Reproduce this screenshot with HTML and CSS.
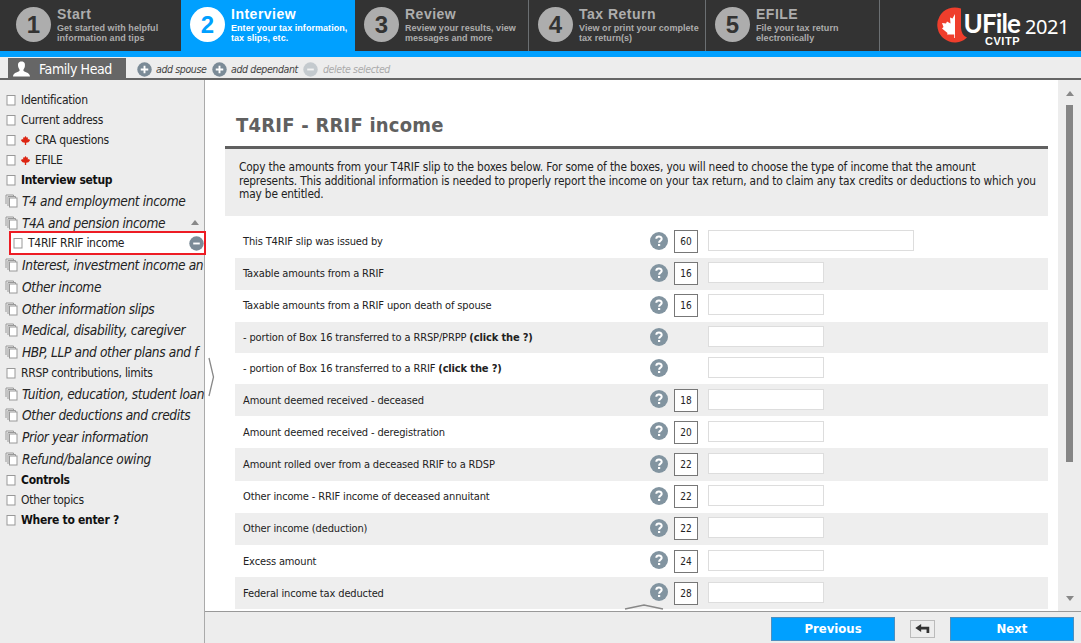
FILE: index.html
```html
<!DOCTYPE html>
<html lang="en">
<head>
<meta charset="utf-8">
<title>UFile CVITP 2021 - T4RIF</title>
<link rel="stylesheet" href="styles.css">
</head>
<body>
<svg class="defs" aria-hidden="true">
  <symbol id="page" viewBox="0 0 10 12"><rect x="1" y="1.500" width="8" height="9.500" fill="#fff" stroke="#999"/></symbol>
  <symbol id="pages" viewBox="0 0 13 14"><path d="M1 10V1H8.500V3M3 12V2.500H10.500V4" fill="#eee" stroke="#999"/><rect x="4.500" y="4" width="7.500" height="9" fill="#fff" stroke="#999"/></symbol>
  <symbol id="leaf" viewBox="0 0 20 20"><path d="M10 0 13 4 15.500 3 15 7.500 18 6.500 20 10 16.500 14 11.500 15V20H8.500V15L3.500 14 0 10 2 6.500 5 7.500 4.500 3 7 4Z" fill="#dc2411"/></symbol>
  <symbol id="help" viewBox="0 0 18 18"><circle cx="9" cy="9" r="9" fill="#8294a0"/><path d="M6.300 6.800C6.400 3.700 11.800 3.800 11.700 6.900 11.600 8.700 9.200 8.500 9.100 10.700" fill="none" stroke="#fff" stroke-width="2"/><rect x="8" y="12" width="2.200" height="2" fill="#fff"/></symbol>
  <symbol id="plus" viewBox="0 0 16 16"><circle cx="8" cy="8" r="7.700" fill="#7b8b97"/><path d="M8 4v8M4 8h8" stroke="#fff" stroke-width="2"/></symbol>
  <symbol id="minus" viewBox="0 0 16 16"><circle cx="8" cy="8" r="7.700" fill="#7b8b97"/><path d="M4.500 8h7" stroke="#fff" stroke-width="2"/></symbol>
</svg>
<div class="app">
  <header class="steps">
    <div class="step s1"><span class="num">1</span><div><h2>Start</h2><p>Get started with helpful<br>information and tips</p></div></div>
    <div class="step s2 active"><span class="num">2</span><div><h2>Interview</h2><p>Enter your tax information,<br>tax slips, etc.</p></div></div>
    <div class="step s3"><span class="num">3</span><div><h2>Review</h2><p>Review your results, view<br>messages and more</p></div></div>
    <div class="step s4"><span class="num">4</span><div><h2>Tax Return</h2><p>View or print your complete<br>tax return(s)</p></div></div>
    <div class="step s5"><span class="num">5</span><div><h2>EFILE</h2><p>File your tax return<br>electronically</p></div></div>
    <div class="brand">
      <svg class="mark" viewBox="0 0 32 36"><path d="M24 1.600A17.500 17.500 0 1 0 30 30.500Q24.500 28.500 24 21Z" fill="#ef3e2c"/><path d="M18 7 15.500 11.500 13 10.500 13.500 16.500 10 14.500 9 16.500 5 16 6.500 20 5 21.500 10.500 26 10 27.500H17.200V31H18Z" fill="#fff"/></svg>
      <div class="wordmark"><span class="ufile">UFile</span><span class="cvitp">CVITP</span></div>
      <span class="year">2021</span>
    </div>
  </header>
  <nav class="members">
    <div class="member"><svg class="person" viewBox="0 0 18 16"><path d="M9 0C5.500 0 5 2.500 5.500 5.500 6 7.500 7 8 7 9.500 7 11.500 0 11 0 16H18C18 11 11 11.500 11 9.500 11 8 12 7.500 12.500 5.500 13 2.500 12.500 0 9 0Z" fill="#fff"/></svg><span>Family Head</span></div>
    <a class="act a1"><svg class="ic"><use href="#plus"/></svg><span>add spouse</span></a>
    <a class="act a2"><svg class="ic"><use href="#plus"/></svg><span>add dependant</span></a>
    <a class="act a3 off"><svg class="ic"><use href="#minus"/></svg><span>delete selected</span></a>
  </nav>
  <div class="body">
    <aside class="side">
      <ul>
        <li><svg class="pg"><use href="#page"/></svg><span>Identification</span></li>
        <li><svg class="pg"><use href="#page"/></svg><span>Current address</span></li>
        <li><svg class="pg"><use href="#page"/></svg><svg class="lf"><use href="#leaf"/></svg><span>CRA questions</span></li>
        <li><svg class="pg"><use href="#page"/></svg><svg class="lf"><use href="#leaf"/></svg><span>EFILE</span></li>
        <li class="b"><svg class="pg"><use href="#page"/></svg><span>Interview setup</span></li>
        <li class="g"><svg class="pgs"><use href="#pages"/></svg><span>T4 and employment income</span></li>
        <li class="g"><svg class="pgs"><use href="#pages"/></svg><span>T4A and pension income</span><i class="up"></i></li>
        <li class="child"><svg class="pg"><use href="#page"/></svg><span>T4RIF RRIF income</span><svg class="ic"><use href="#minus"/></svg></li>
        <li class="g"><svg class="pgs"><use href="#pages"/></svg><span>Interest, investment income an</span></li>
        <li class="g"><svg class="pgs"><use href="#pages"/></svg><span>Other income</span></li>
        <li class="g"><svg class="pgs"><use href="#pages"/></svg><span>Other information slips</span></li>
        <li class="g"><svg class="pgs"><use href="#pages"/></svg><span>Medical, disability, caregiver</span></li>
        <li class="g"><svg class="pgs"><use href="#pages"/></svg><span>HBP, LLP and other plans and f</span></li>
        <li><svg class="pg"><use href="#page"/></svg><span>RRSP contributions, limits</span></li>
        <li class="g"><svg class="pgs"><use href="#pages"/></svg><span>Tuition, education, student loan</span></li>
        <li class="g"><svg class="pgs"><use href="#pages"/></svg><span>Other deductions and credits</span></li>
        <li class="g"><svg class="pgs"><use href="#pages"/></svg><span>Prior year information</span></li>
        <li class="g"><svg class="pgs"><use href="#pages"/></svg><span>Refund/balance owing</span></li>
        <li class="b"><svg class="pg"><use href="#page"/></svg><span>Controls</span></li>
        <li><svg class="pg"><use href="#page"/></svg><span>Other topics</span></li>
        <li class="b"><svg class="pg"><use href="#page"/></svg><span>Where to enter ?</span></li>
      </ul>
    </aside>
    <div class="right">
      <svg class="grip-side" viewBox="0 0 7 40"><path d="M1 1 5.500 20 1 39" fill="none" stroke="#888" stroke-width="1.300"/></svg>
      <div class="view">
        <main class="content">
          <h1>T4RIF - RRIF income</h1>
          <div class="intro">Copy the amounts from your T4RIF slip to the boxes below. For some of the boxes, you will need to choose the type of income that the amount<br>represents. This additional information is needed to properly report the income on your tax return, and to claim any tax credits or deductions to which you<br>may be entitled.</div>
          <div class="rows">
            <div class="row"><label>This T4RIF slip was issued by</label><svg class="q"><use href="#help"/></svg><span class="box">60</span><span class="field wide"></span></div>
            <div class="row"><label>Taxable amounts from a RRIF</label><svg class="q"><use href="#help"/></svg><span class="box">16</span><span class="field"></span></div>
            <div class="row"><label>Taxable amounts from a RRIF upon death of spouse</label><svg class="q"><use href="#help"/></svg><span class="box">16</span><span class="field"></span></div>
            <div class="row short"><label>- portion of Box 16 transferred to a RRSP/PRPP <b>(click the ?)</b></label><svg class="q"><use href="#help"/></svg><span class="box none"></span><span class="field"></span></div>
            <div class="row short"><label>- portion of Box 16 transferred to a RRIF <b>(click the ?)</b></label><svg class="q"><use href="#help"/></svg><span class="box none"></span><span class="field"></span></div>
            <div class="row"><label>Amount deemed received - deceased</label><svg class="q"><use href="#help"/></svg><span class="box">18</span><span class="field"></span></div>
            <div class="row"><label>Amount deemed received - deregistration</label><svg class="q"><use href="#help"/></svg><span class="box">20</span><span class="field"></span></div>
            <div class="row"><label>Amount rolled over from a deceased RRIF to a RDSP</label><svg class="q"><use href="#help"/></svg><span class="box">22</span><span class="field"></span></div>
            <div class="row"><label>Other income - RRIF income of deceased annuitant</label><svg class="q"><use href="#help"/></svg><span class="box">22</span><span class="field"></span></div>
            <div class="row"><label>Other income (deduction)</label><svg class="q"><use href="#help"/></svg><span class="box">22</span><span class="field"></span></div>
            <div class="row"><label>Excess amount</label><svg class="q"><use href="#help"/></svg><span class="box">24</span><span class="field"></span></div>
            <div class="row"><label>Federal income tax deducted</label><svg class="q"><use href="#help"/></svg><span class="box">28</span><span class="field"></span></div>
          </div>
        </main>
        <div class="scroll"><i class="up"></i><div class="thumb"></div><i class="down"></i></div>
      </div>
      <footer class="foot">
        <svg class="grip-foot" viewBox="0 0 40 6"><path d="M1 5 20 1 39 5" fill="none" stroke="#888" stroke-width="1.300"/></svg>
        <button class="btn">Previous</button>
        <button class="back"><svg viewBox="0 0 16 10"><path d="M0 4.500 6.500 0V3H15.500V10H12.500V6H6.500V9Z" fill="#333"/></svg></button>
        <button class="btn">Next</button>
      </footer>
    </div>
  </div>
</div>
</body>
</html>
```
FILE: styles.css
```css
* { box-sizing: border-box; }
body { margin: 0; font-family: "DejaVu Sans Condensed", "DejaVu Sans", sans-serif; font-stretch: condensed; font-size: 11px; color: #222; background: #fff; }
h1, h2, p, ul { margin: 0; padding: 0; }
ul { list-style: none; }
svg { display: block; flex: none; }
.defs { position: absolute; width: 0; height: 0; }
.app { display: flex; flex-direction: column; width: 1081px; height: 643px; overflow: hidden; }

.steps { display: flex; height: 57px; background: #333; border-bottom: 6px solid #00a0ff; font-family: "Liberation Sans", Arial, sans-serif; font-stretch: normal; flex: none; }
.step { display: flex; gap: 6px; padding: 7px 0 0 9px; color: #adadad; border-right: 1px solid #6b6f72; white-space: nowrap; }
.s1 { width: 181px; padding-left: 16px; border: 0; }
.s2 { width: 174px; border: 0; }
.s3 { width: 174px; }
.s4 { width: 177px; }
.s5 { width: 174px; }
.active { background: #00a0ff; color: #fff; }
.num { display: flex; align-items: center; justify-content: center; width: 35px; height: 35px; border-radius: 50%; background: #adadad; color: #333; font: bold 24px "Liberation Sans", Arial, sans-serif; flex: none; }
.active .num { background: #fff; color: #00a0ff; }
.step h2 { font-size: 14px; line-height: 15px; letter-spacing: .5px; }
.step p { font-size: 9px; font-weight: bold; line-height: 10px; margin-top: 1px; letter-spacing: .05px; }
.brand { display: flex; align-items: flex-start; padding: 7px 0 0 57px; color: #fff; }
.mark { width: 32px; height: 36px; margin-right: -6px; }
.wordmark { display: flex; flex-direction: column; align-items: flex-end; width: 57px; }
.ufile { font: bold 26px/28px Lato, sans-serif; margin-top: 2px; letter-spacing: -.9px; }
.cvitp { font: bold 11px/10px "Liberation Sans", Arial, sans-serif; margin-top: -1px; letter-spacing: .5px; }
.year { font: 20px/26px "Noto Sans", sans-serif; margin: 7px 0 0 5px; letter-spacing: -.4px; }

.members { display: flex; align-items: center; height: 23px; padding-left: 8px; background: #ededed; border-bottom: 2px solid #666; flex: none; }
.member { display: flex; align-items: center; gap: 9px; align-self: stretch; margin-top: 1px; width: 118px; padding: 2px 0 0 5px; background: #666; color: #fff; font-size: 14px; letter-spacing: -.4px; white-space: nowrap; }
.person { width: 17px; height: 16px; }
.act { display: flex; align-items: center; gap: 4px; padding-top: 3px; font-size: 10.5px; letter-spacing: -.38px; font-style: italic; color: #444; white-space: nowrap; }
.a1 { margin-left: 11px; width: 75px; }
.a2 { width: 91px; }
.off { color: #aaa; gap: 5px; }
.off .ic { opacity: .35; }
.ic { width: 15px; height: 15px; }

.body { display: flex; flex: 1; min-height: 0; }
.side { width: 205px; padding-top: 10px; background: #ededed; border-right: 1px solid #aaa; flex: none; }
.side li { display: flex; align-items: center; height: 20px; padding-left: 6px; font-size: 12px; letter-spacing: -.29px; white-space: nowrap; overflow: hidden; }
.pg { width: 10px; height: 12px; margin-right: 5px; }
.pgs { width: 13px; height: 14px; margin-right: 4px; }
.lf { width: 9px; height: 9px; margin-right: 5px; }
.side .b { font-weight: bold; color: #111; }
.side .g { height: 21.7px; padding-left: 5px; font-size: 13.6px; letter-spacing: -.36px; font-style: italic; }
.up { border: 4px solid transparent; border-top: 0; border-bottom: 5px solid #888; }
.down { border: 4px solid transparent; border-bottom: 0; border-top: 5px solid #888; }
.side .up { margin-left: auto; margin-right: 5px; }
.side .child { position: relative; width: 197px; height: 24px; margin: -2px 0 -1px 9px; padding-left: 2px; background: #fff; border: 2px solid #ed1c24; }
.child .ic { margin-left: auto; }

.right { position: relative; display: flex; flex-direction: column; flex: 1; min-width: 0; }
.grip-side { position: absolute; left: 3px; top: 277px; width: 7px; height: 40px; }
.view { display: flex; height: 531px; overflow: hidden; }
.content { flex: 1; padding-left: 20px; padding-right: 10px; }
h1 { height: 69px; padding: 33px 0 0 11px; border-bottom: 3px solid #606060; font-size: 20px; line-height: 24px; letter-spacing: .22px; color: #606060; }
.intro { height: 67px; padding: 12px 0 0 14px; background: #ededed; font-size: 11.8px; letter-spacing: -.17px; line-height: 13.7px; white-space: nowrap; }
.rows { padding: 9.500px 0 0 10px; }
.row { display: flex; align-items: center; height: 32.2px; padding-left: 8px; }
.row.short { height: 31px; }
.row:nth-child(even) { background: #eee; }
.row label { width: 407px; letter-spacing: -.14px; white-space: nowrap; }
.q { width: 18px; height: 18px; margin-bottom: 2px; }
.box { display: flex; align-items: center; justify-content: center; width: 24px; height: 23px; margin: 0 10px 0 6px; border: 1px solid #777; background: #fff; font-size: 10px; }
.none { visibility: hidden; }
.field { width: 116px; height: 21px; margin-bottom: 2px; border: 1px solid #ddd; background: #fff; }
.wide { width: 206px; }
.scroll { display: flex; flex-direction: column; align-items: center; width: 23px; padding: 11px 0 10px; background: #ededed; }
.thumb { width: 7px; height: 357px; margin: 9px 0 auto; background: #858585; }
.foot { position: relative; display: flex; align-items: center; justify-content: flex-end; gap: 15px; height: 32px; padding: 2px 7px 0 0; background: #ededed; border-top: 1px solid #999; }
.grip-foot { position: absolute; left: 419px; top: -8px; width: 40px; height: 6px; }
.btn { width: 124px; height: 24px; padding: 0; border: 1px solid #4c8fc0; background: #00a0ff; color: #fff; font: bold 13px "DejaVu Sans Condensed", "DejaVu Sans", sans-serif; font-stretch: condensed; }
.back { display: flex; align-items: center; justify-content: center; width: 25px; height: 18px; padding: 0; border: 1px solid #bbb; background: #ededed; }
.back svg { width: 15px; height: 9px; }
```
